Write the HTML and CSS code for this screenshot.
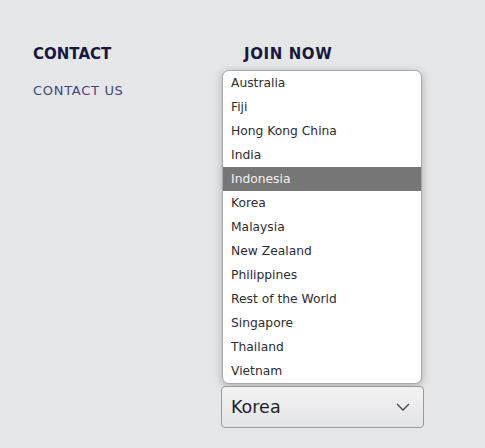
FILE: index.html
```html
<!DOCTYPE html>
<html lang="en">
<head>
<meta charset="utf-8">
<title>Footer</title>
<link rel="stylesheet" href="styles.css">
</head>
<body>
<div class="footer">
  <div class="col contact">
    <h3 class="heading">CONTACT</h3>
    <a class="link" href="#">CONTACT US</a>
  </div>
  <div class="col join">
    <h3 class="heading join-heading">JOIN NOW</h3>
    <ul class="listbox">
      <li class="option">Australia</li>
      <li class="option">Fiji</li>
      <li class="option">Hong Kong China</li>
      <li class="option">India</li>
      <li class="option active">Indonesia</li>
      <li class="option">Korea</li>
      <li class="option">Malaysia</li>
      <li class="option">New Zealand</li>
      <li class="option">Philippines</li>
      <li class="option">Rest of the World</li>
      <li class="option">Singapore</li>
      <li class="option">Thailand</li>
      <li class="option">Vietnam</li>
    </ul>
    <div class="select">
      <span class="value">Korea</span>
      <svg class="chev" width="14" height="8" viewBox="0 0 14 8"><path d="M1 1 L7 7 L13 1" fill="none" stroke="#444" stroke-width="1.3"/></svg>
    </div>
  </div>
</div>
</body>
</html>
```
FILE: styles.css
```css
html, body {
  margin: 0;
  padding: 0;
  background: #e5e6e8;
  height: 100%;
}
body {
  font-family: "DejaVu Sans", "Open Sans", sans-serif;
}
.footer {
  display: flex;
  padding: 45px 0 0 33px;
}
.col {
  display: flex;
  flex-direction: column;
}
.contact {
  width: 188px;
}
.heading {
  margin: 0;
  font-size: 15px;
  font-weight: bold;
  color: #17173f;
  line-height: 18px;
}
.join-heading {
  margin-left: 23px;
  letter-spacing: 0.6px;
}
.link {
  margin-top: 20px;
  font-size: 13px;
  color: #44447c;
  text-decoration: none;
  letter-spacing: 0.7px;
  font-weight: normal;
}
.listbox {
  list-style: none;
  margin: 7px 0 0 1px;
  padding: 0;
  width: 198px;
  background: #fff;
  border: 1px solid #a9a9a9;
  border-radius: 7px;
  box-shadow: 0 2px 8px rgba(0,0,0,0.25);
  overflow: hidden;
}
.option {
  height: 24px;
  line-height: 24px;
  padding-left: 8px;
  font-size: 12.3px;
  color: #2d2d33;
}
.option.active {
  background: #767676;
  color: #f2f2f2;
}
.select {
  margin-top: 2px;
  width: 201px;
  height: 40px;
  border: 1px solid #9a9a9a;
  border-radius: 4px;
  background: linear-gradient(#f2f2f3, #e4e4e6);
  display: flex;
  align-items: center;
  justify-content: space-between;
}
.value {
  margin-left: 9px;
  font-size: 17.5px;
  color: #1e1e28;
}
.chev {
  margin-right: 13px;
}
```
